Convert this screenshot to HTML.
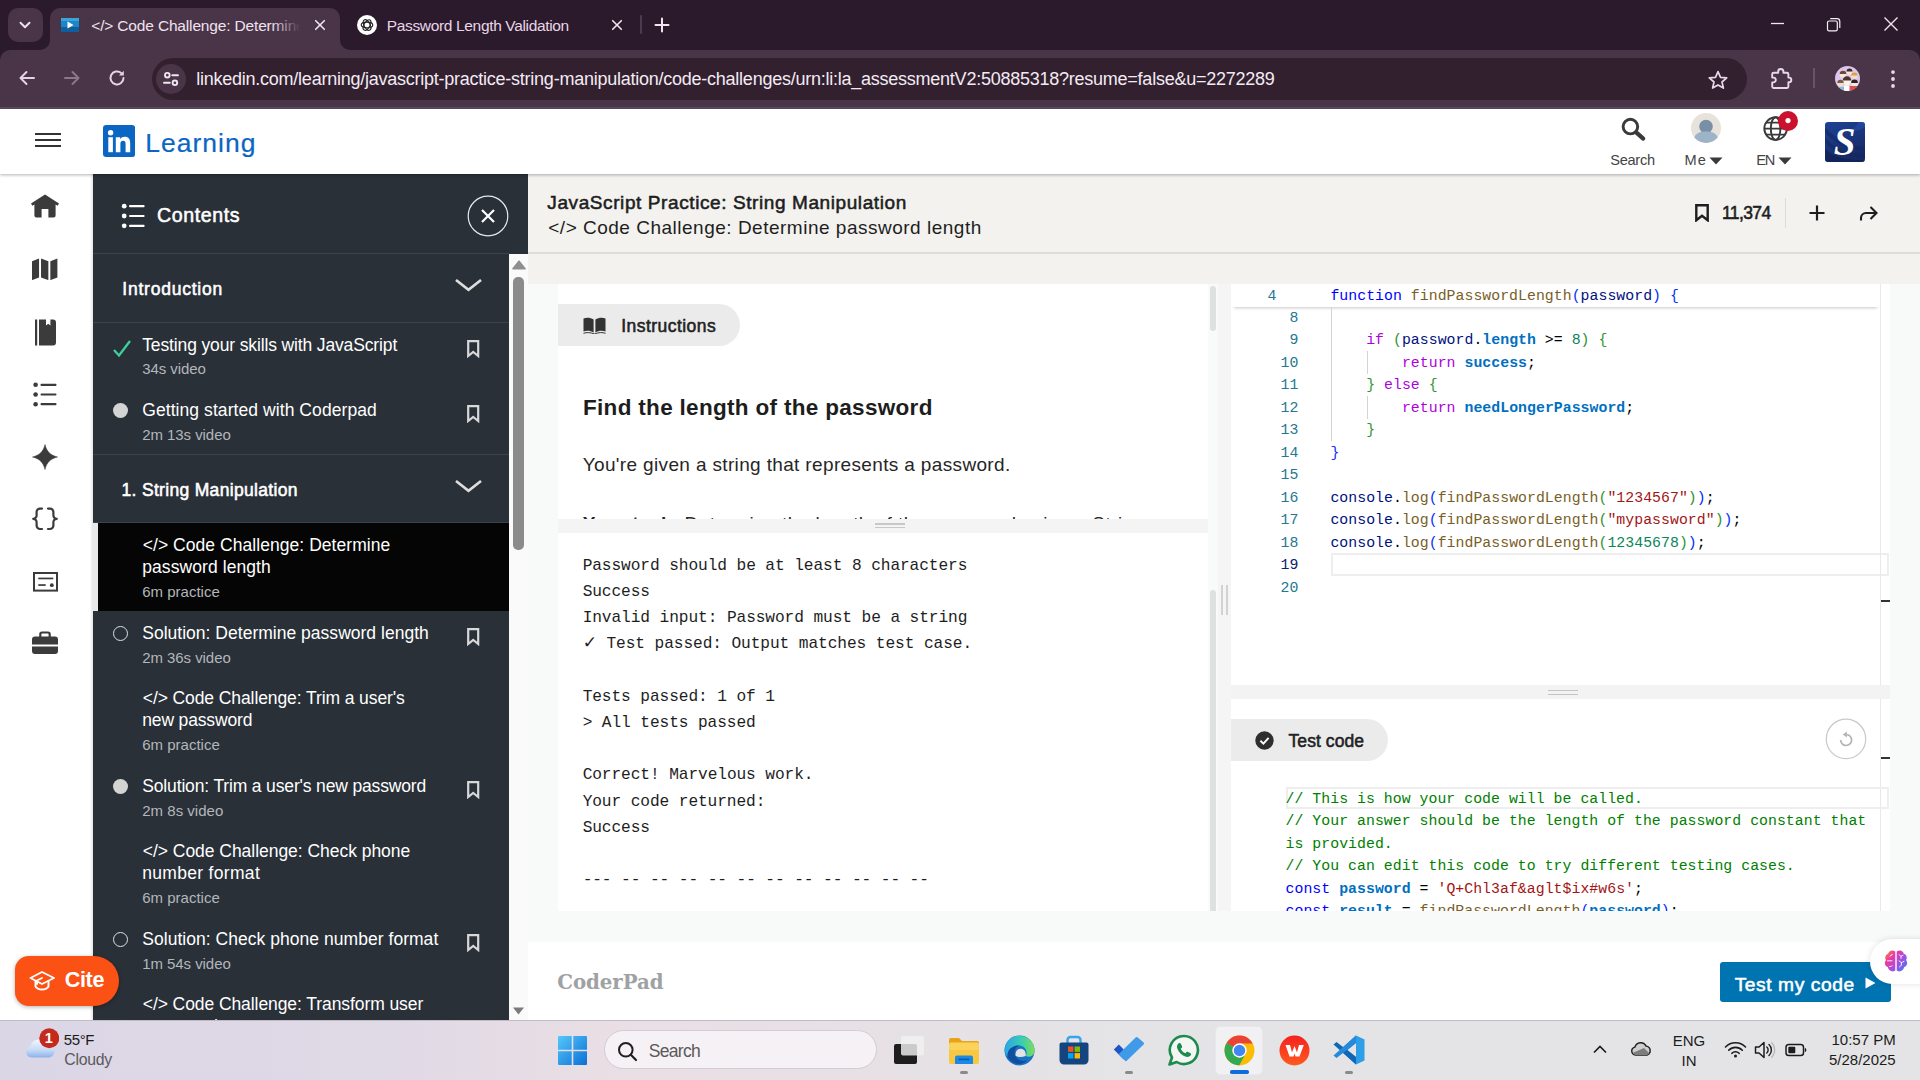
<!DOCTYPE html>
<html lang="en"><head><meta charset="utf-8"><title>Code Challenge: Determine password length</title>
<style>
html,body{margin:0;padding:0;}
body{width:1920px;height:1080px;overflow:hidden;position:relative;background:#f8f9f9;font-family:"Liberation Sans",sans-serif;}
#root{position:absolute;left:0;top:0;width:1920px;height:1080px;overflow:hidden;}
#root div,#root svg,#root span.t{position:absolute;}
span.t{white-space:pre;}
</style></head>
<body><div id="root">
<div style="left:0px;top:0px;width:1920px;height:108px;background:#2b1a2b;"></div>
<div style="left:0px;top:50px;width:1920px;height:58px;background:#4a3448;border-radius:10px 10px 0 0;"></div>
<div style="left:0px;top:107px;width:1920px;height:1.5px;background:#5c4a5e;"></div>
<div style="left:8px;top:8px;width:35px;height:34px;background:#4a3448;border-radius:10px;"></div>
<svg style="left:17px;top:17px;" width="16" height="16" viewBox="0 0 16 16" preserveAspectRatio="none"><path d="M3.5 5.8 L8 10.3 L12.5 5.8" fill="none" stroke="#eadfea" stroke-width="2" stroke-linecap="round" stroke-linejoin="round"/></svg>
<div style="left:50px;top:8px;width:290px;height:44px;background:#4a3448;border-radius:10px 10px 0 0;"></div>
<svg style="left:40px;top:40px;" width="10" height="10" viewBox="0 0 10 10" preserveAspectRatio="none"><path d="M10 0 V10 H0 A10 10 0 0 0 10 0Z" fill="#4a3448"/></svg>
<svg style="left:340px;top:40px;" width="10" height="10" viewBox="0 0 10 10" preserveAspectRatio="none"><path d="M0 0 V10 H10 A10 10 0 0 1 0 0Z" fill="#4a3448"/></svg>
<svg style="left:61px;top:18px;" width="18" height="14" viewBox="0 0 18 14" preserveAspectRatio="none"><rect width="18" height="14" fill="#1b86c8"/><rect y="9" width="18" height="5" fill="#0f5f9e"/><rect width="18" height="3" fill="#3aa3dc"/><path d="M6.5 3.5 L12.5 7 L6.5 10.5Z" fill="#fff"/></svg>
<span class="t" style="letter-spacing:-0.161px;left:91.25px;top:15.63px;font-size:15.5px;line-height:20px;color:#efe3ef;">&lt;/&gt; Code Challenge: Determine</span>
<div style="left:272px;top:12px;width:36px;height:28px;background:linear-gradient(90deg,rgba(74,52,72,0),#4a3448 78%);"></div>
<svg style="left:312px;top:17px;" width="16" height="16" viewBox="0 0 16 16" preserveAspectRatio="none"><path d="M3.7 3.7 L12.3 12.3 M12.3 3.7 L3.7 12.3" stroke="#efe6ef" stroke-width="1.6" stroke-linecap="round"/></svg>
<svg style="left:357px;top:15px;" width="20" height="20" viewBox="0 0 20 20" preserveAspectRatio="none"><circle cx="10" cy="10" r="10" fill="#fff"/><g fill="none" stroke="#222" stroke-width="1.1"><ellipse cx="10" cy="10" rx="5.8" ry="2.9"/><ellipse cx="10" cy="10" rx="5.8" ry="2.9" transform="rotate(60 10 10)"/><ellipse cx="10" cy="10" rx="5.8" ry="2.9" transform="rotate(120 10 10)"/></g></svg>
<span class="t" style="letter-spacing:-0.341px;left:386.75px;top:15.63px;font-size:15.5px;line-height:20px;color:#e8d6e8;">Password Length Validation</span>
<svg style="left:609px;top:17px;" width="16" height="16" viewBox="0 0 16 16" preserveAspectRatio="none"><path d="M3.7 3.7 L12.3 12.3 M12.3 3.7 L3.7 12.3" stroke="#efe6ef" stroke-width="1.6" stroke-linecap="round"/></svg>
<div style="left:640px;top:15px;width:2px;height:19px;background:#4e3a50;border-radius:1px;"></div>
<svg style="left:654px;top:17px;" width="16" height="16" viewBox="0 0 16 16" preserveAspectRatio="none"><path d="M8 1.5 V14.5 M1.5 8 H14.5" stroke="#efe6ef" stroke-width="2" stroke-linecap="round"/></svg>
<svg style="left:1770px;top:16px;" width="16" height="16" viewBox="0 0 16 16" preserveAspectRatio="none"><path d="M1 7.5 H14" stroke="#efe6ef" stroke-width="1.3"/></svg>
<svg style="left:1825px;top:16px;" width="16" height="16" viewBox="0 0 16 16" preserveAspectRatio="none"><rect x="2.5" y="5" width="9.8" height="9.8" rx="1.6" fill="none" stroke="#f6eef6" stroke-width="1.2"/><path d="M5.2 2.6 H12 A2.8 2.8 0 0 1 14.8 5.4 V12" fill="none" stroke="#f6eef6" stroke-width="1.2"/></svg>
<svg style="left:1883px;top:16px;" width="16" height="16" viewBox="0 0 16 16" preserveAspectRatio="none"><path d="M1.5 1.5 L14.5 14.5 M14.5 1.5 L1.5 14.5" stroke="#efe6ef" stroke-width="1.4"/></svg>
<svg style="left:17px;top:68px;" width="20" height="20" viewBox="0 0 20 20" preserveAspectRatio="none"><path d="M17 10 H4 M9.5 4 L3.5 10 L9.5 16" fill="none" stroke="#e3d3e3" stroke-width="2" stroke-linecap="round" stroke-linejoin="round"/></svg>
<svg style="left:62px;top:68px;" width="20" height="20" viewBox="0 0 20 20" preserveAspectRatio="none"><path d="M3 10 H16 M10.5 4 L16.5 10 L10.5 16" fill="none" stroke="#8b768c" stroke-width="2" stroke-linecap="round" stroke-linejoin="round"/></svg>
<svg style="left:107px;top:68px;" width="20" height="20" viewBox="0 0 20 20" preserveAspectRatio="none"><path d="M16.5 10 A6.5 6.5 0 1 1 14.2 5" fill="none" stroke="#e3d3e3" stroke-width="2" stroke-linecap="round"/><path d="M16.8 2.8 V7.6 H12 Z" fill="#e3d3e3"/></svg>
<div style="left:152px;top:58px;width:1595px;height:42px;background:#32202f;border-radius:21px;"></div>
<div style="left:156px;top:64px;width:30px;height:30px;background:#4a3448;border-radius:15px;"></div>
<svg style="left:161px;top:69px;" width="20" height="20" viewBox="0 0 20 20" preserveAspectRatio="none"><g fill="none" stroke="#efe6ef" stroke-width="1.9" stroke-linecap="round"><circle cx="6.3" cy="6.2" r="2.3"/><path d="M11.3 6.2 H17"/><circle cx="13.9" cy="13.8" r="2.3"/><path d="M3 13.8 H8.8"/></g></svg>
<span class="t" style="letter-spacing:-0.245px;left:196.25px;top:68.26px;font-size:18px;line-height:23px;color:#f3ebf3;">linkedin.com/learning/javascript-practice-string-manipulation/code-challenges/urn:li:la_assessmentV2:50885318?resume=false&amp;u=2272289</span>
<svg style="left:1706.5px;top:68.5px;" width="22" height="22" viewBox="0 0 22 22" preserveAspectRatio="none"><path d="M11 2.6 L13.5 8.3 L19.7 8.9 L15 13 L16.4 19.1 L11 15.9 L5.6 19.1 L7 13 L2.3 8.9 L8.5 8.3 Z" fill="none" stroke="#e8d8e8" stroke-width="1.7" stroke-linejoin="round"/></svg>
<svg style="left:1769px;top:66.5px;" width="24" height="24" viewBox="0 0 24 24" preserveAspectRatio="none"><path d="M9.2 4.6 a2.6 2.6 0 0 1 5.2 0 V5.8 H18 a1.4 1.4 0 0 1 1.4 1.4 V10.6 h0.6 a2.3 2.3 0 0 1 0 4.6 H19.4 V19.6 A1.4 1.4 0 0 1 18 21 H4.6 A1.4 1.4 0 0 1 3.2 19.6 V15.4 H4.4 a2.4 2.4 0 0 0 0 -4.8 H3.2 V7.2 A1.4 1.4 0 0 1 4.6 5.8 H9.2 Z" fill="none" stroke="#e8d8e8" stroke-width="1.9" stroke-linejoin="round"/></svg>
<div style="left:1813px;top:68px;width:1.5px;height:20px;background:#66536a;"></div>
<svg style="left:1835px;top:66px;" width="25" height="25" viewBox="0 0 25 25" preserveAspectRatio="none"><defs><clipPath id="pav"><circle cx="12.5" cy="12.5" r="12.5"/></clipPath></defs><circle cx="12.5" cy="12.5" r="12.5" fill="#dcc6ee"/><g clip-path="url(#pav)"><circle cx="8" cy="8.5" r="3.3" fill="#f6e7da"/><path d="M4.7 8 a3.3 3.3 0 0 1 6.6 0 Z" fill="#6b4a3a"/><circle cx="14.5" cy="6" r="3" fill="#f6e7da"/><path d="M11.5 5.6 a3 3 0 0 1 6 0 Z" fill="#3a2b28"/><circle cx="19.3" cy="10" r="3.2" fill="#f3dcc8"/><path d="M16.1 9.6 a3.2 3.2 0 0 1 6.4 0 Z" fill="#d9a441"/><circle cx="12" cy="15" r="4.2" fill="#fbf1e8"/><path d="M7.8 14.4 a4.2 4.2 0 0 1 8.4 0 Z" fill="#4a352c"/><circle cx="5.5" cy="17.5" r="3.2" fill="#f3dcc8"/><path d="M2.3 17 a3.2 3.2 0 0 1 6.4 0 Z" fill="#7a5a48"/><circle cx="19.5" cy="17.5" r="3.4" fill="#f6e7da"/><path d="M16.1 17 a3.4 3.4 0 0 1 6.8 0 Z" fill="#2c2326"/><path d="M14 20 h9 v6 h-9 Z" fill="#d9534a"/><path d="M1 21 h8 v5 h-8 Z" fill="#7fc0d8"/><path d="M9 19.5 h5.5 v6 h-5.5 Z" fill="#ffffff"/></g></svg>
<svg style="left:1887.5px;top:68.5px;" width="10" height="20" viewBox="0 0 10 20" preserveAspectRatio="none"><circle cx="5" cy="3.1" r="1.9" fill="#e8d8e8"/><circle cx="5" cy="10" r="1.9" fill="#e8d8e8"/><circle cx="5" cy="17" r="1.9" fill="#e8d8e8"/></svg>
<div style="left:0px;top:108.5px;width:1920px;height:912px;background:#fff;"></div>
<div style="left:528px;top:174px;width:1392px;height:846px;background:#f8f9f9;"></div>
<div style="left:528px;top:174px;width:1392px;height:110px;background:#f3f2ef;"></div>
<div style="left:528px;top:252px;width:1392px;height:2px;background:#dedddb;"></div>
<div style="left:90px;top:174px;width:3px;height:846px;background:linear-gradient(90deg,#fff,#e4e4e4);"></div>
<svg style="left:31px;top:194px;" width="28" height="24" viewBox="0 0 28 24" preserveAspectRatio="none"><path d="M14 0.5 L28 9.6 L26.6 11.8 L24.6 10.6 V21.5 a2 2 0 0 1 -2 2 H17.4 V15 H10.6 V23.5 H5.4 a2 2 0 0 1 -2 -2 V10.6 L1.4 11.8 L0 9.6 Z" fill="#3b3b3b"/></svg>
<svg style="left:32.3px;top:257.8px;" width="25.4" height="22.6" viewBox="0 0 27 25" preserveAspectRatio="none"><path d="M0 3.5 L7.5 0.5 V21.5 L0 24.5 Z M9.6 0.5 L17.4 3.5 V24.5 L9.6 21.5 Z M19.5 3.5 L27 0.5 V21.5 L19.5 24.5 Z" fill="#3b3b3b"/></svg>
<svg style="left:35px;top:319px;" width="21" height="27" viewBox="0 0 21 27" preserveAspectRatio="none"><path d="M0 0.5 H2.2 V26.5 H0 Z M4 0.5 H11 V6.5 L13.2 4.8 L15.4 6.5 V0.5 H18 a3 3 0 0 1 3 3 V23.5 a3 3 0 0 1 -3 3 H4 Z" fill="#3b3b3b"/></svg>
<svg style="left:33px;top:382px;" width="25" height="25" viewBox="0 0 25 25" preserveAspectRatio="none"><g fill="#3b3b3b"><circle cx="2.6" cy="2.8" r="2.3"/><circle cx="2.6" cy="12.5" r="2.3"/><circle cx="2.6" cy="22.2" r="2.3"/><rect x="7.5" y="1.7" width="16" height="2.2" rx="1"/><rect x="7.5" y="11.4" width="16" height="2.2" rx="1"/><rect x="7.5" y="21.1" width="16" height="2.2" rx="1"/></g></svg>
<svg style="left:32px;top:444px;" width="26" height="26" viewBox="0 0 26 26" preserveAspectRatio="none"><path d="M13 0.5 C14.6 7.4 18.6 11.4 25.5 13 C18.6 14.6 14.6 18.6 13 25.5 C11.4 18.6 7.4 14.6 0.5 13 C7.4 11.4 11.4 7.4 13 0.5 Z" fill="#3b3b3b" stroke="#3b3b3b" stroke-width="0.5" stroke-linejoin="round"/></svg>
<svg style="left:31px;top:507px;" width="28" height="24" viewBox="0 0 28 24" preserveAspectRatio="none"><g fill="none" stroke="#3b3b3b" stroke-width="2.2" stroke-linecap="round" stroke-linejoin="round"><path d="M11 1.6 H9 a3.4 3.4 0 0 0 -3.4 3.4 V8.3 a3.4 3.4 0 0 1 -3.4 3.5 a3.4 3.4 0 0 1 3.4 3.5 V18.6 a3.4 3.4 0 0 0 3.4 3.4 H11"/><path d="M17 1.6 H19 a3.4 3.4 0 0 1 3.4 3.4 V8.3 a3.4 3.4 0 0 0 3.4 3.5 a3.4 3.4 0 0 0 -3.4 3.5 V18.6 a3.4 3.4 0 0 1 -3.4 3.4 H17"/></g></svg>
<svg style="left:32.5px;top:572px;" width="25" height="20" viewBox="0 0 25 20" preserveAspectRatio="none"><rect x="1" y="1" width="23" height="17.6" fill="none" stroke="#3b3b3b" stroke-width="2"/><rect x="5.3" y="5.6" width="15" height="1.7" fill="#3b3b3b"/><rect x="5.3" y="12.2" width="7.4" height="1.7" fill="#3b3b3b"/><circle cx="18.8" cy="13.2" r="1.9" fill="#3b3b3b"/></svg>
<svg style="left:32px;top:630.5px;" width="26" height="24" viewBox="0 0 26 24" preserveAspectRatio="none"><path d="M7.2 5.4 V3.3 a2.8 2.8 0 0 1 2.8 -2.8 H16 a2.8 2.8 0 0 1 2.8 2.8 V5.4 H23 a3 3 0 0 1 3 3 V13.6 H0 V8.4 a3 3 0 0 1 3 -3 Z M9.4 3.4 V5.4 H16.6 V3.4 a0.8 0.8 0 0 0 -0.8 -0.8 H10.2 a0.8 0.8 0 0 0 -0.8 0.8 Z M0 15.5 H26 V20 a3 3 0 0 1 -3 3 H3 a3 3 0 0 1 -3 -3 Z" fill="#3b3b3b" fill-rule="evenodd"/></svg>
<div style="left:93px;top:174px;width:435px;height:846px;background:#293038;"></div>
<div style="left:93px;top:253px;width:416px;height:1px;background:#3d434d;"></div>
<div style="left:93px;top:322px;width:416px;height:1px;background:#3d434d;"></div>
<div style="left:93px;top:454px;width:416px;height:1px;background:#3d434d;"></div>
<div style="left:93px;top:522px;width:416px;height:1px;background:#3d434d;"></div>
<svg style="left:121px;top:203px;" width="25" height="26" viewBox="0 0 25 26" preserveAspectRatio="none"><g fill="#fff"><circle cx="3.2" cy="3.2" r="2.4"/><circle cx="3.2" cy="13" r="2.4"/><circle cx="3.2" cy="22.8" r="2.4"/><rect x="8" y="2.1" width="15.6" height="2.2" rx="1"/><rect x="8" y="11.9" width="15.6" height="2.2" rx="1"/><rect x="8" y="21.7" width="15.6" height="2.2" rx="1"/></g></svg>
<span class="t" style="letter-spacing:0.580px;left:157.05px;top:202.71px;font-size:19.6px;line-height:25px;-webkit-text-stroke:0.55px #fff;color:#fff;">Contents</span>
<svg style="left:467px;top:195px;" width="42" height="42" viewBox="0 0 42 42" preserveAspectRatio="none"><circle cx="21" cy="21" r="19.8" fill="none" stroke="#e8e8e8" stroke-width="1.2"/><path d="M15 15 L27 27 M27 15 L15 27" stroke="#fff" stroke-width="2.2"/></svg>
<span class="t" style="letter-spacing:0.777px;left:122.25px;top:277.84px;font-size:17.5px;line-height:23px;-webkit-text-stroke:0.55px #fff;color:#fff;">Introduction</span>
<svg style="left:455px;top:279px;" width="27" height="13" viewBox="0 0 27 13" preserveAspectRatio="none"><path d="M1 1 L13.5 10.8 L26 1" fill="none" stroke="#dedede" stroke-width="2.6"/></svg>
<span class="t" style="letter-spacing:0.315px;left:121.55px;top:478.64px;font-size:17.5px;line-height:23px;-webkit-text-stroke:0.55px #fff;color:#fff;">1. String Manipulation</span>
<svg style="left:455px;top:479.5px;" width="27" height="13" viewBox="0 0 27 13" preserveAspectRatio="none"><path d="M1 1 L13.5 10.8 L26 1" fill="none" stroke="#dedede" stroke-width="2.6"/></svg>
<svg style="left:112px;top:339px;" width="20" height="19" viewBox="0 0 20 19" preserveAspectRatio="none"><path d="M2 11 L7 16.5 L18 2" fill="none" stroke="#3ecf9c" stroke-width="2.3"/></svg>
<span class="t" style="letter-spacing:-0.137px;left:142.25px;top:334.24px;font-size:17.5px;line-height:23px;color:#fff;">Testing your skills with JavaScript</span>
<span class="t" style="letter-spacing:-0.090px;left:142.25px;top:358.80px;font-size:15px;line-height:20px;color:#b3b6bb;">34s video</span>
<svg style="left:466.5px;top:340px;" width="13" height="18" viewBox="0 0 13 18" preserveAspectRatio="none"><path d="M1.2 1.2 H11.2 V16 L6.2 12 L1.2 16 Z" fill="none" stroke="#d8d8d8" stroke-width="2.2"/></svg>
<div style="left:112.5px;top:402.5px;width:15px;height:15px;background:#d4d4d4;border-radius:50%;"></div>
<span class="t" style="letter-spacing:0.071px;left:142.25px;top:399.24px;font-size:17.5px;line-height:23px;color:#fff;">Getting started with Coderpad</span>
<span class="t" style="letter-spacing:-0.065px;left:142.25px;top:424.90px;font-size:15px;line-height:20px;color:#b3b6bb;">2m 13s video</span>
<svg style="left:466.5px;top:405px;" width="13" height="18" viewBox="0 0 13 18" preserveAspectRatio="none"><path d="M1.2 1.2 H11.2 V16 L6.2 12 L1.2 16 Z" fill="none" stroke="#d8d8d8" stroke-width="2.2"/></svg>
<div style="left:93px;top:522.6px;width:416px;height:88.4px;background:#050505;"></div>
<div style="left:93px;top:522.6px;width:5px;height:88.4px;background:#e9e9e9;"></div>
<span class="t" style="letter-spacing:0.049px;left:142.75px;top:534.04px;font-size:17.5px;line-height:23px;color:#fff;">&lt;/&gt; Code Challenge: Determine</span>
<span class="t" style="letter-spacing:0.075px;left:142.25px;top:556.04px;font-size:17.5px;line-height:23px;color:#fff;">password length</span>
<span class="t" style="letter-spacing:-0.003px;left:142.25px;top:582.30px;font-size:15px;line-height:20px;color:#b3b6bb;">6m practice</span>
<div style="left:112.5px;top:625.5px;width:13px;height:13px;background:transparent;border-radius:50%;border:1.2px solid #e0e0e0;"></div>
<span class="t" style="letter-spacing:0.015px;left:142.25px;top:622.04px;font-size:17.5px;line-height:23px;color:#fff;">Solution: Determine password length</span>
<span class="t" style="letter-spacing:-0.065px;left:142.25px;top:647.80px;font-size:15px;line-height:20px;color:#b3b6bb;">2m 36s video</span>
<svg style="left:466.5px;top:628px;" width="13" height="18" viewBox="0 0 13 18" preserveAspectRatio="none"><path d="M1.2 1.2 H11.2 V16 L6.2 12 L1.2 16 Z" fill="none" stroke="#d8d8d8" stroke-width="2.2"/></svg>
<span class="t" style="letter-spacing:-0.094px;left:142.75px;top:686.94px;font-size:17.5px;line-height:23px;color:#fff;">&lt;/&gt; Code Challenge: Trim a user's</span>
<span class="t" style="letter-spacing:-0.152px;left:142.25px;top:708.94px;font-size:17.5px;line-height:23px;color:#fff;">new password</span>
<span class="t" style="letter-spacing:-0.003px;left:142.25px;top:735.10px;font-size:15px;line-height:20px;color:#b3b6bb;">6m practice</span>
<div style="left:112.5px;top:778.5px;width:15px;height:15px;background:#d4d4d4;border-radius:50%;"></div>
<span class="t" style="letter-spacing:-0.151px;left:142.25px;top:774.64px;font-size:17.5px;line-height:23px;color:#fff;">Solution: Trim a user's new password</span>
<span class="t" style="letter-spacing:0.013px;left:142.25px;top:800.80px;font-size:15px;line-height:20px;color:#b3b6bb;">2m 8s video</span>
<svg style="left:466.5px;top:781px;" width="13" height="18" viewBox="0 0 13 18" preserveAspectRatio="none"><path d="M1.2 1.2 H11.2 V16 L6.2 12 L1.2 16 Z" fill="none" stroke="#d8d8d8" stroke-width="2.2"/></svg>
<span class="t" style="letter-spacing:-0.034px;left:142.75px;top:840.24px;font-size:17.5px;line-height:23px;color:#fff;">&lt;/&gt; Code Challenge: Check phone</span>
<span class="t" style="letter-spacing:0.309px;left:142.25px;top:861.94px;font-size:17.5px;line-height:23px;color:#fff;">number format</span>
<span class="t" style="letter-spacing:-0.003px;left:142.25px;top:888.20px;font-size:15px;line-height:20px;color:#b3b6bb;">6m practice</span>
<div style="left:112.5px;top:931.5px;width:13px;height:13px;background:transparent;border-radius:50%;border:1.2px solid #e0e0e0;"></div>
<span class="t" style="letter-spacing:0.037px;left:142.25px;top:927.64px;font-size:17.5px;line-height:23px;color:#fff;">Solution: Check phone number format</span>
<span class="t" style="letter-spacing:-0.065px;left:142.25px;top:953.80px;font-size:15px;line-height:20px;color:#b3b6bb;">1m 54s video</span>
<svg style="left:466.5px;top:934px;" width="13" height="18" viewBox="0 0 13 18" preserveAspectRatio="none"><path d="M1.2 1.2 H11.2 V16 L6.2 12 L1.2 16 Z" fill="none" stroke="#d8d8d8" stroke-width="2.2"/></svg>
<span class="t" style="letter-spacing:-0.078px;left:142.75px;top:993.24px;font-size:17.5px;line-height:23px;color:#fff;">&lt;/&gt; Code Challenge: Transform user</span>
<span class="t" style="left:143px;top:1015.24px;font-size:17.5px;line-height:23px;color:#fff;">password</span>
<div style="left:509px;top:254px;width:19px;height:766px;background:#fafafa;"></div>
<svg style="left:511.5px;top:259.5px;" width="14" height="10" viewBox="0 0 14 10" preserveAspectRatio="none"><path d="M7 1.2 L13 8.8 H1 Z" fill="#8f8f8f" stroke="#8f8f8f" stroke-width="1.6" stroke-linejoin="round"/></svg>
<div style="left:513px;top:277px;width:10.5px;height:273px;background:#8b8b8b;border-radius:5px;"></div>
<svg style="left:512px;top:1006px;" width="13" height="10" viewBox="0 0 13 10" preserveAspectRatio="none"><path d="M6.5 8.5 L12 1.5 H1 Z" fill="#7a7a7a"/></svg>
<span class="t" style="letter-spacing:0.592px;left:547.35px;top:190.32px;font-size:19px;line-height:25px;-webkit-text-stroke:0.55px #1e1e1e;color:#1e1e1e;">JavaScript Practice: String Manipulation</span>
<span class="t" style="letter-spacing:0.503px;left:548.25px;top:215.42px;font-size:19px;line-height:25px;color:#1e1e1e;">&lt;/&gt; Code Challenge: Determine password length</span>
<svg style="left:1695px;top:204px;" width="14" height="18" viewBox="0 0 14 18" preserveAspectRatio="none"><path d="M1.3 1.3 H12.7 V16.3 L7 11.8 L1.3 16.3 Z" fill="none" stroke="#1e1e1e" stroke-width="2.4"/></svg>
<span class="t" style="letter-spacing:-0.627px;left:1722.05px;top:201.84px;font-size:17.5px;line-height:23px;-webkit-text-stroke:0.55px #1e1e1e;color:#1e1e1e;">11,374</span>
<div style="left:1785px;top:198px;width:1px;height:30px;background:#dcdbd8;"></div>
<svg style="left:1808px;top:204px;" width="18" height="18" viewBox="0 0 18 18" preserveAspectRatio="none"><path d="M9 1.5 V16.5 M1.5 9 H16.5" stroke="#1e1e1e" stroke-width="2.2"/></svg>
<svg style="left:1859px;top:205px;" width="20" height="17" viewBox="0 0 20 17" preserveAspectRatio="none"><path d="M2 15.5 V13 a5 5 0 0 1 5 -5 H17 M11.5 2 L17.5 8 L11.5 14" fill="none" stroke="#1e1e1e" stroke-width="2.1"/></svg>
<div style="left:558px;top:284px;width:650px;height:235px;background:#fff;"></div>
<div style="left:1208px;top:284px;width:10px;height:627px;background:#f9fafa;"></div>
<div style="left:558px;top:304px;width:182px;height:42px;background:#ebebeb;border-radius:0 21px 21px 0;"></div>
<svg style="left:583px;top:317px;" width="23" height="17" viewBox="0 0 23 17" preserveAspectRatio="none"><path d="M0.5 1.5 C3.5 0.2 7.5 0.4 10.6 2.6 V15.6 C7.5 13.6 3.5 13.4 0.5 14.6 Z M12.4 2.6 C15.5 0.4 19.5 0.2 22.5 1.5 V14.6 C19.5 13.4 15.5 13.6 12.4 15.6 Z" fill="#333"/><path d="M0.5 16.3 C3.5 15.2 7.5 15.3 11.5 17 C15.5 15.3 19.5 15.2 22.5 16.3" fill="none" stroke="#333" stroke-width="1"/></svg>
<span class="t" style="letter-spacing:0.456px;left:621.25px;top:315.14px;font-size:17.5px;line-height:23px;-webkit-text-stroke:0.55px #222;color:#222;">Instructions</span>
<span class="t" style="letter-spacing:0.317px;left:582.95px;top:393.30px;font-size:22.5px;line-height:29px;font-weight:700;color:#1d1d1d;">Find the length of the password</span>
<span class="t" style="letter-spacing:0.352px;left:582.75px;top:451.92px;font-size:19px;line-height:25px;color:#262626;">You're given a string that represents a password.</span>
<div style="left:558px;top:500px;width:652px;height:19px;overflow:hidden;">
<span class="t" style="letter-spacing:0.450px;left:24.75px;top:11.42px;font-size:19px;line-height:25px;color:#262626;"><b>Your task:</b> Determine the length of the password using a String</span>
</div>
<div style="left:1210px;top:286px;width:6px;height:45px;background:#dfe1e1;border-radius:3px;"></div>
<div style="left:558px;top:519px;width:650px;height:14px;background:#f4f4f4;"></div>
<div style="left:875px;top:523.3px;width:30px;height:1.5px;background:#c8c8c8;"></div>
<div style="left:875px;top:526.6px;width:30px;height:1.5px;background:#c8c8c8;"></div>
<div style="left:558px;top:533px;width:650px;height:378px;background:#fff;"></div>
<span class="t" style="letter-spacing:-0.097px;left:582.65px;top:555.88px;font-size:16.2px;line-height:21px;font-family:'Liberation Mono', monospace;color:#1e1e1e;">Password should be at least 8 characters</span>
<span class="t" style="letter-spacing:-0.110px;left:582.65px;top:582.08px;font-size:16.2px;line-height:21px;font-family:'Liberation Mono', monospace;color:#1e1e1e;">Success</span>
<span class="t" style="letter-spacing:-0.097px;left:582.65px;top:608.28px;font-size:16.2px;line-height:21px;font-family:'Liberation Mono', monospace;color:#1e1e1e;">Invalid input: Password must be a string</span>
<span class="t" style="letter-spacing:-0.093px;left:582.65px;top:634.48px;font-size:16.2px;line-height:21px;font-family:'Liberation Mono', monospace;color:#1e1e1e;"><span style="font-family:DejaVu Sans,sans-serif;font-size:17px;line-height:1px;">✓</span> Test passed: Output matches test case.</span>
<span class="t" style="letter-spacing:-0.100px;left:582.65px;top:686.88px;font-size:16.2px;line-height:21px;font-family:'Liberation Mono', monospace;color:#1e1e1e;">Tests passed: 1 of 1</span>
<span class="t" style="letter-spacing:-0.100px;left:582.65px;top:713.08px;font-size:16.2px;line-height:21px;font-family:'Liberation Mono', monospace;color:#1e1e1e;">&gt; All tests passed</span>
<span class="t" style="letter-spacing:-0.098px;left:582.65px;top:765.48px;font-size:16.2px;line-height:21px;font-family:'Liberation Mono', monospace;color:#1e1e1e;">Correct! Marvelous work.</span>
<span class="t" style="letter-spacing:-0.100px;left:582.65px;top:791.68px;font-size:16.2px;line-height:21px;font-family:'Liberation Mono', monospace;color:#1e1e1e;">Your code returned:</span>
<span class="t" style="letter-spacing:-0.110px;left:582.65px;top:817.88px;font-size:16.2px;line-height:21px;font-family:'Liberation Mono', monospace;color:#1e1e1e;">Success</span>
<span class="t" style="letter-spacing:-0.097px;left:582.65px;top:870.28px;font-size:16.2px;line-height:21px;font-family:'Liberation Mono', monospace;color:#1e1e1e;">--- -- -- -- -- -- -- -- -- -- -- --</span>
<div style="left:1210px;top:590px;width:6px;height:321px;background:#dfe1e1;border-radius:3px 3px 0 0;"></div>
<div style="left:1218px;top:284px;width:13px;height:627px;background:#f5f5f5;"></div>
<div style="left:1221px;top:585px;width:2px;height:30px;background:#d2d2d2;"></div>
<div style="left:1226px;top:585px;width:2px;height:30px;background:#d2d2d2;"></div>
<div style="left:1231px;top:284px;width:659px;height:401px;background:#fff;"></div>
<div style="left:1231px;top:284px;width:649px;height:22.5px;background:#fff;box-shadow:0 4px 3px -3px rgba(0,0,0,.22);"></div>
<span class="t" style="right:643.5px;top:287.15px;font-size:14.83px;line-height:19px;font-family:'Liberation Mono', monospace;color:#237893;">4</span>
<span class="t" style="letter-spacing:0.035px;left:1330.45px;top:287.15px;font-size:14.83px;line-height:19px;font-family:'Liberation Mono', monospace;color:#000;"><span style="color:#0000ff;">function</span> <span style="color:#795e26;">findPasswordLength</span><span style="color:#0431fa;">(</span><span style="color:#001080;">password</span><span style="color:#0431fa;">)</span> <span style="color:#0431fa;">{</span></span>
<div style="left:1331px;top:553px;width:554px;height:19px;background:transparent;border:2px solid #eeeeee;"></div>
<span class="t" style="right:621.7px;top:309.15px;font-size:14.83px;line-height:19px;font-family:'Liberation Mono', monospace;color:#237893;">8</span>
<span class="t" style="right:621.7px;top:331.15px;font-size:14.83px;line-height:19px;font-family:'Liberation Mono', monospace;color:#237893;">9</span>
<span class="t" style="letter-spacing:0.035px;left:1330.45px;top:331.15px;font-size:14.83px;line-height:19px;font-family:'Liberation Mono', monospace;color:#000;">    <span style="color:#af00db;">if</span> <span style="color:#319331;">(</span><span style="color:#001080;">password</span>.<span style="color:#0070c1;font-weight:700;">length</span> &gt;= <span style="color:#098658;">8</span><span style="color:#319331;">)</span> <span style="color:#319331;">{</span></span>
<span class="t" style="right:621.7px;top:354.15px;font-size:14.83px;line-height:19px;font-family:'Liberation Mono', monospace;color:#237893;">10</span>
<span class="t" style="letter-spacing:0.036px;left:1330.45px;top:354.15px;font-size:14.83px;line-height:19px;font-family:'Liberation Mono', monospace;color:#000;">        <span style="color:#af00db;">return</span> <span style="color:#0070c1;font-weight:700;">success</span>;</span>
<span class="t" style="right:621.7px;top:376.15px;font-size:14.83px;line-height:19px;font-family:'Liberation Mono', monospace;color:#237893;">11</span>
<span class="t" style="letter-spacing:0.036px;left:1330.45px;top:376.15px;font-size:14.83px;line-height:19px;font-family:'Liberation Mono', monospace;color:#000;">    <span style="color:#319331;">}</span> <span style="color:#af00db;">else</span> <span style="color:#319331;">{</span></span>
<span class="t" style="right:621.7px;top:399.15px;font-size:14.83px;line-height:19px;font-family:'Liberation Mono', monospace;color:#237893;">12</span>
<span class="t" style="letter-spacing:0.036px;left:1330.45px;top:399.15px;font-size:14.83px;line-height:19px;font-family:'Liberation Mono', monospace;color:#000;">        <span style="color:#af00db;">return</span> <span style="color:#0070c1;font-weight:700;">needLongerPassword</span>;</span>
<span class="t" style="right:621.7px;top:421.15px;font-size:14.83px;line-height:19px;font-family:'Liberation Mono', monospace;color:#237893;">13</span>
<span class="t" style="letter-spacing:0.042px;left:1330.45px;top:421.15px;font-size:14.83px;line-height:19px;font-family:'Liberation Mono', monospace;color:#000;">    <span style="color:#319331;">}</span></span>
<span class="t" style="right:621.7px;top:444.15px;font-size:14.83px;line-height:19px;font-family:'Liberation Mono', monospace;color:#237893;">14</span>
<span class="t" style="left:1330.45px;top:444.15px;font-size:14.83px;line-height:19px;font-family:'Liberation Mono', monospace;color:#000;"><span style="color:#0431fa;">}</span></span>
<span class="t" style="right:621.7px;top:466.15px;font-size:14.83px;line-height:19px;font-family:'Liberation Mono', monospace;color:#237893;">15</span>
<span class="t" style="right:621.7px;top:489.15px;font-size:14.83px;line-height:19px;font-family:'Liberation Mono', monospace;color:#237893;">16</span>
<span class="t" style="letter-spacing:0.035px;left:1330.45px;top:489.15px;font-size:14.83px;line-height:19px;font-family:'Liberation Mono', monospace;color:#000;"><span style="color:#001080;">console</span>.<span style="color:#795e26;">log</span><span style="color:#0431fa;">(</span><span style="color:#795e26;">findPasswordLength</span><span style="color:#319331;">(</span><span style="color:#a31515;">"1234567"</span><span style="color:#319331;">)</span><span style="color:#0431fa;">)</span>;</span>
<span class="t" style="right:621.7px;top:511.15px;font-size:14.83px;line-height:19px;font-family:'Liberation Mono', monospace;color:#237893;">17</span>
<span class="t" style="letter-spacing:0.035px;left:1330.45px;top:511.15px;font-size:14.83px;line-height:19px;font-family:'Liberation Mono', monospace;color:#000;"><span style="color:#001080;">console</span>.<span style="color:#795e26;">log</span><span style="color:#0431fa;">(</span><span style="color:#795e26;">findPasswordLength</span><span style="color:#319331;">(</span><span style="color:#a31515;">"mypassword"</span><span style="color:#319331;">)</span><span style="color:#0431fa;">)</span>;</span>
<span class="t" style="right:621.7px;top:534.15px;font-size:14.83px;line-height:19px;font-family:'Liberation Mono', monospace;color:#237893;">18</span>
<span class="t" style="letter-spacing:0.035px;left:1330.45px;top:534.15px;font-size:14.83px;line-height:19px;font-family:'Liberation Mono', monospace;color:#000;"><span style="color:#001080;">console</span>.<span style="color:#795e26;">log</span><span style="color:#0431fa;">(</span><span style="color:#795e26;">findPasswordLength</span><span style="color:#319331;">(</span><span style="color:#098658;">12345678</span><span style="color:#319331;">)</span><span style="color:#0431fa;">)</span>;</span>
<span class="t" style="right:621.7px;top:556.15px;font-size:14.83px;line-height:19px;font-family:'Liberation Mono', monospace;color:#0b216f;">19</span>
<span class="t" style="right:621.7px;top:579.15px;font-size:14.83px;line-height:19px;font-family:'Liberation Mono', monospace;color:#237893;">20</span>
<div style="left:1331px;top:306.5px;width:1px;height:134.5px;background:#d3d3d3;"></div>
<div style="left:1367px;top:351px;width:1px;height:22.5px;background:#d3d3d3;"></div>
<div style="left:1367px;top:396px;width:1px;height:22.5px;background:#d3d3d3;"></div>
<div style="left:1880px;top:284px;width:1px;height:401px;background:#e9e9e9;"></div>
<div style="left:1881px;top:600.3px;width:9px;height:2px;background:#333;"></div>
<div style="left:1231px;top:685px;width:659px;height:14px;background:#f3f3f3;"></div>
<div style="left:1548px;top:689.5px;width:30px;height:1.2px;background:#c4c4c4;"></div>
<div style="left:1548px;top:693.5px;width:30px;height:1.2px;background:#c4c4c4;"></div>
<div style="left:1231px;top:699px;width:659px;height:212px;background:#fff;"></div>
<div style="left:1231px;top:719px;width:156.5px;height:42px;background:#ebebeb;border-radius:0 21px 21px 0;"></div>
<svg style="left:1255px;top:730.5px;" width="19" height="19" viewBox="0 0 19 19" preserveAspectRatio="none"><circle cx="9.5" cy="9.5" r="9.2" fill="#2f2f2f"/><path d="M5.4 9.8 L8.4 12.6 L13.6 6.8" fill="none" stroke="#fff" stroke-width="1.9"/></svg>
<span class="t" style="letter-spacing:0.074px;left:1288.55px;top:729.74px;font-size:17.5px;line-height:23px;-webkit-text-stroke:0.55px #222;color:#222;">Test code</span>
<svg style="left:1825px;top:718px;" width="42" height="42" viewBox="0 0 42 42" preserveAspectRatio="none"><circle cx="21" cy="20.9" r="19.7" fill="#fff" stroke="#c9c9c9" stroke-width="1.2"/><path d="M21.4 16.5 A5.5 5.5 0 1 1 15.6 22" fill="none" stroke="#b1b4b4" stroke-width="1.7"/><path d="M17.9 16.6 L21.9 13.6 V19.4 Z" fill="#b1b4b4"/></svg>
<div style="left:1880px;top:699px;width:1px;height:212px;background:#e9e9e9;"></div>
<div style="left:1881px;top:757.2px;width:9px;height:2px;background:#333;"></div>
<div style="left:1286px;top:787px;width:599px;height:17.5px;background:transparent;border:2px solid #eeeeee;"></div>
<div style="left:1231px;top:780px;width:659px;height:131px;overflow:hidden;">
<span class="t" style="letter-spacing:0.036px;left:54.549999999999955px;top:9.55px;font-size:14.83px;line-height:19px;font-family:'Liberation Mono', monospace;color:#000;"><span style="color:#008000;">// This is how your code will be called.</span></span>
<span class="t" style="letter-spacing:0.036px;left:54.549999999999955px;top:31.55px;font-size:14.83px;line-height:19px;font-family:'Liberation Mono', monospace;color:#000;"><span style="color:#008000;">// Your answer should be the length of the password constant that</span></span>
<span class="t" style="letter-spacing:0.039px;left:54.549999999999955px;top:54.55px;font-size:14.83px;line-height:19px;font-family:'Liberation Mono', monospace;color:#000;"><span style="color:#008000;">is provided.</span></span>
<span class="t" style="letter-spacing:0.036px;left:54.549999999999955px;top:76.55px;font-size:14.83px;line-height:19px;font-family:'Liberation Mono', monospace;color:#000;"><span style="color:#008000;">// You can edit this code to try different testing cases.</span></span>
<span class="t" style="letter-spacing:0.036px;left:54.549999999999955px;top:99.55px;font-size:14.83px;line-height:19px;font-family:'Liberation Mono', monospace;color:#000;"><span style="color:#0000ff;">const</span> <span style="color:#0070c1;font-weight:700;">password</span> = <span style="color:#a31515;">'Q+Chl3af&amp;aglt$ix#w6s'</span>;</span>
<span class="t" style="letter-spacing:0.035px;left:54.549999999999955px;top:121.55px;font-size:14.83px;line-height:19px;font-family:'Liberation Mono', monospace;color:#000;"><span style="color:#0000ff;">const</span> <span style="color:#0070c1;font-weight:700;">result</span> = <span style="color:#795e26;">findPasswordLength</span><span style="color:#0431fa;">(</span><span style="color:#0070c1;font-weight:700;">password</span><span style="color:#0431fa;">)</span>;</span>
</div>
<div style="left:528px;top:942px;width:1392px;height:78px;background:#fff;"></div>
<span class="t" style="letter-spacing:-0.069px;left:557.25px;top:969.15px;font-size:19.8px;line-height:26px;font-family:'DejaVu Serif', 'Liberation Serif', serif;font-weight:700;color:#a0a1a3;">CoderPad</span>
<div style="left:1720px;top:962px;width:171px;height:40px;background:#0073b1;border-radius:3px;"></div>
<span class="t" style="letter-spacing:0.587px;left:1734.65px;top:971.85px;font-size:19.2px;line-height:25px;-webkit-text-stroke:0.55px #fff;color:#fff;">Test my code</span>
<svg style="left:1865px;top:976.5px;" width="11" height="12" viewBox="0 0 11 12" preserveAspectRatio="none"><path d="M0.5 0.5 L10.5 6 L0.5 11.5 Z" fill="#fff"/></svg>
<div style="left:15px;top:956px;width:104px;height:50px;background:#fb5114;border-radius:14px 25px 25px 14px;box-shadow:0 1px 4px rgba(0,0,0,.3);"></div>
<svg style="left:29px;top:969.5px;" width="27.5" height="24" viewBox="0 0 27.5 24" preserveAspectRatio="none"><g fill="none" stroke="#fff" stroke-width="1.9" stroke-linejoin="round" stroke-linecap="round"><path d="M13 2 L25 8 L13 14 L1.5 8 Z"/><path d="M6.5 11 V16.5 C9 20.5 17 20.5 19.5 16.5 V11"/><path d="M13 8 L8 10.5 V14"/></g></svg>
<span class="t" style="letter-spacing:-0.366px;left:64.75px;top:965.82px;font-size:21.6px;line-height:28px;font-weight:700;color:#fff;">Cite</span>
<div style="left:1870px;top:938.7px;width:70px;height:45.3px;background:#fff;border-radius:22.65px;box-shadow:0 0 6px rgba(0,0,0,.13);"></div>
<svg style="left:1883.5px;top:950px;" width="24" height="23" viewBox="0 0 24 23" preserveAspectRatio="none"><defs><linearGradient id="brg" x1="0" y1="0.1" x2="1" y2="0.9"><stop offset="0" stop-color="#ff7a3d"/><stop offset=".3" stop-color="#e93aa6"/><stop offset=".6" stop-color="#a94be0"/><stop offset="1" stop-color="#3f7df7"/></linearGradient></defs><path d="M11.3 1.6 C8.6 -0.6 4.6 0.6 4.2 3.8 C1.4 4.6 0.4 7.8 2 10 C-0.2 12.4 0.8 16.2 3.8 17 C4.4 20.6 8.6 22.6 11.3 20.6 Z M12.7 1.6 C15.4 -0.6 19.4 0.6 19.8 3.8 C22.6 4.6 23.6 7.8 22 10 C24.2 12.4 23.2 16.2 20.2 17 C19.6 20.6 15.4 22.6 12.7 20.6 Z" fill="url(#brg)"/><g stroke="#fff" stroke-width="0.9" fill="none" stroke-linecap="round"><path d="M3.5 10.8 H8 M6 6.2 Q6.4 4.6 8.4 4.6 M5.6 16.6 Q7.4 17.2 8.2 15.6"/><path d="M15.2 4.6 L17 6.4 L19 5.2 M17 6.4 V8.4 M15 10.8 L17.4 12.6 L20 11.4 M17.4 12.6 V15 M15.4 17 L17.4 15 "/></g></svg>
<div style="left:0px;top:108.5px;width:1920px;height:65.5px;background:#fff;box-shadow:0 1px 3px rgba(0,0,0,.3);"></div>
<div style="left:35px;top:132.6px;width:25.6px;height:2px;background:#333;"></div>
<div style="left:35px;top:138.8px;width:25.6px;height:2px;background:#333;"></div>
<div style="left:35px;top:145.1px;width:25.6px;height:2px;background:#333;"></div>
<svg style="left:103px;top:125px;" width="32.2" height="32" viewBox="0 0 32.2 32" preserveAspectRatio="none"><rect width="32.2" height="32" rx="3.2" fill="#0a66c2"/><circle cx="7.6" cy="7.8" r="2.7" fill="#fff"/><rect x="5.3" y="12.2" width="4.6" height="15" fill="#fff"/><path d="M12.8 12.2 H17.2 V14.2 C18.2 12.6 19.9 11.8 21.9 11.8 C25.6 11.8 27.2 14.2 27.2 18 V27.2 H22.6 V19 C22.6 17 21.9 15.8 20.2 15.8 C18.4 15.8 17.4 17 17.4 19 V27.2 H12.8 Z" fill="#fff"/></svg>
<span class="t" style="letter-spacing:0.994px;left:145.35px;top:125.62px;font-size:26.5px;line-height:34px;color:#0a66c2;-webkit-text-stroke:0.2px #0a66c2;">Learning</span>
<svg style="left:1620px;top:116px;" width="28" height="28" viewBox="0 0 28 28" preserveAspectRatio="none"><circle cx="10.4" cy="10.6" r="7.3" fill="none" stroke="#3a3a3a" stroke-width="2.9"/><path d="M16.2 16.4 L23.2 22.6" stroke="#3a3a3a" stroke-width="4.2" stroke-linecap="round"/></svg>
<span class="t" style="letter-spacing:-0.290px;left:1610.25px;top:150.84px;font-size:14.6px;line-height:19px;color:#444;">Search</span>
<svg style="left:1690.5px;top:113px;" width="30" height="30" viewBox="0 0 30 30" preserveAspectRatio="none"><defs><clipPath id="avc"><circle cx="15" cy="15" r="15"/></clipPath></defs><circle cx="15" cy="15" r="15" fill="#e7e2dc"/><g clip-path="url(#avc)"><circle cx="15" cy="13.5" r="6.8" fill="#788fa5"/><path d="M2 31 C2 20.5 8.5 18.6 15 18.6 C21.5 18.6 28 20.5 28 31 Z" fill="#9db3c8"/></g></svg>
<span class="t" style="left:1684.6px;top:150.84px;font-size:14.6px;line-height:19px;color:#444;letter-spacing:0.9px;">Me</span>
<svg style="left:1708.8px;top:156.8px;" width="14" height="8" viewBox="0 0 14 8" preserveAspectRatio="none"><path d="M0.5 0.5 H13.5 L7 7.5 Z" fill="#3a3a3a"/></svg>
<svg style="left:1763px;top:115.5px;" width="26" height="26" viewBox="0 0 26 26" preserveAspectRatio="none"><g fill="none" stroke="#3a3a3a" stroke-width="1.9"><circle cx="12.6" cy="12.6" r="11.3"/><ellipse cx="12.6" cy="12.6" rx="4.8" ry="11.3"/><path d="M1.3 12.6 H23.9 M3 6.6 H22.2 M3 18.6 H22.2"/></g></svg>
<svg style="left:1778px;top:111px;" width="20" height="20" viewBox="0 0 20 20" preserveAspectRatio="none"><circle cx="10" cy="10" r="10" fill="#cb112d"/><circle cx="10" cy="9.6" r="2.6" fill="#fff"/></svg>
<span class="t" style="letter-spacing:-1.281px;left:1756.25px;top:150.84px;font-size:14.6px;line-height:19px;color:#444;">EN</span>
<svg style="left:1777.6px;top:156.8px;" width="14" height="8" viewBox="0 0 14 8" preserveAspectRatio="none"><path d="M0.5 0.5 H13.5 L7 7.5 Z" fill="#3a3a3a"/></svg>
<svg style="left:1825px;top:122px;" width="40" height="40" viewBox="0 0 40 40" preserveAspectRatio="none"><defs><clipPath id="slc"><rect width="40" height="40" rx="3.2"/></clipPath><linearGradient id="slg" x1="0" y1="0" x2="0.4" y2="1"><stop offset="0" stop-color="#1d4297"/><stop offset="1" stop-color="#172a66"/></linearGradient></defs><g clip-path="url(#slc)"><rect width="40" height="40" fill="url(#slg)"/><path d="M0 6 C10 14 20 24 40 25 V29 C20 28 10 20 0 11 Z" fill="#14265e" opacity=".55"/><path d="M0 16 C10 26 22 32 40 32 V36 C22 36 10 30 0 21 Z" fill="#14265e" opacity=".55"/><path d="M0 27 C8 34 18 38 40 38.5 V40 H0 Z" fill="#121f52" opacity=".7"/><path d="M33 0 C32 5 28 8 22 8 C30 10 36 8 40 5 V0 Z" fill="#274fa8" opacity=".6"/></g><text x="19.6" y="33" text-anchor="middle" font-family="Liberation Serif, serif" font-weight="700" font-style="italic" font-size="39" fill="#fff">S</text></svg>
<div style="left:0px;top:1020px;width:1920px;height:60px;background:linear-gradient(90deg,#dbd6e6 0%,#e0d9e6 20%,#eadfe4 33%,#e6e1e5 48%,#e4e4e6 60%,#e4e4e6 100%);border-top:1px solid #bfbcc3;box-sizing:border-box;"></div>
<svg style="left:24.5px;top:1037.5px;" width="31" height="20" viewBox="0 0 31 20" preserveAspectRatio="none"><defs><linearGradient id="cl" x1="0" y1="0" x2="0" y2="1"><stop offset="0" stop-color="#f3f7fe"/><stop offset=".6" stop-color="#c5d9f6"/><stop offset="1" stop-color="#8db2ea"/></linearGradient></defs><path d="M6.5 19.5 a5.6 5.6 0 0 1 -0.8 -11.1 a8.4 8.4 0 0 1 16 -1.8 a6.5 6.5 0 0 1 2.6 12.9 Z" fill="url(#cl)"/></svg>
<svg style="left:38.5px;top:1028px;" width="20.5" height="20.5" viewBox="0 0 20.5 20.5" preserveAspectRatio="none"><circle cx="10.25" cy="10.25" r="10" fill="#c42b1c"/></svg>
<span class="t" style="left:-351.2px;width:800px;text-align:center;top:1028.78px;font-size:14.5px;line-height:19px;font-weight:700;color:#fff;">1</span>
<span class="t" style="letter-spacing:-0.353px;left:63.75px;top:1030.10px;font-size:15px;line-height:20px;color:#1a1a1a;">55°F</span>
<span class="t" style="letter-spacing:-0.258px;left:64.25px;top:1048.93px;font-size:15.8px;line-height:21px;color:#5a5a5a;">Cloudy</span>
<svg style="left:558px;top:1036px;" width="29" height="29" viewBox="0 0 29 29" preserveAspectRatio="none"><defs><linearGradient id="wg" x1="0" y1="0" x2="1" y2="1"><stop offset="0" stop-color="#56c8fb"/><stop offset="1" stop-color="#0a6fd6"/></linearGradient></defs><path d="M0 1 a1 1 0 0 1 1 -1 H13.7 V13.7 H0 Z M15.3 0 H28 a1 1 0 0 1 1 1 V13.7 H15.3 Z M0 15.3 H13.7 V29 H1 a1 1 0 0 1 -1 -1 Z M15.3 15.3 H29 V28 a1 1 0 0 1 -1 1 H15.3 Z" fill="url(#wg)"/></svg>
<div style="left:603.5px;top:1030.2px;width:273.5px;height:39.3px;background:#f6f1f5;border-radius:19.5px;border:1px solid #d3ccd4;box-sizing:border-box;"></div>
<svg style="left:617px;top:1040.5px;" width="21" height="21" viewBox="0 0 21 21" preserveAspectRatio="none"><circle cx="8.8" cy="8.8" r="6.8" fill="none" stroke="#1f1f1f" stroke-width="2"/><path d="M13.8 13.8 L19 19" stroke="#1f1f1f" stroke-width="2.2" stroke-linecap="round"/></svg>
<span class="t" style="letter-spacing:-0.671px;left:648.65px;top:1039.64px;font-size:17.5px;line-height:23px;color:#5a5a5a;">Search</span>
<svg style="left:894px;top:1036px;" width="30" height="28" viewBox="0 0 30 28" preserveAspectRatio="none"><rect x="0" y="8" width="23" height="20" rx="2" fill="#1e1e1e"/><rect x="7" y="0" width="23" height="19.5" rx="2" fill="#f2f2f2" fill-opacity=".82"/></svg>
<svg style="left:948px;top:1036px;" width="32" height="29" viewBox="0 0 32 29" preserveAspectRatio="none"><path d="M1 4 a2 2 0 0 1 2 -2 H11 L14 5 H29 a2 2 0 0 1 2 2 V10 H1 Z" fill="#e8a317"/><rect x="1" y="6.5" width="30" height="21.5" rx="2" fill="#fbd35a"/><path d="M1 14 H31 V26 a2 2 0 0 1 -2 2 H3 a2 2 0 0 1 -2 -2 Z" fill="#f9c843"/><path d="M7 28 V21.5 a2 2 0 0 1 2 -2 H23 a2 2 0 0 1 2 2 V28 Z" fill="#1b8ae6"/><rect x="10.5" y="22.5" width="11" height="1.8" rx=".9" fill="#0c5cb0"/></svg>
<div style="left:960px;top:1070.5px;width:8px;height:3px;background:#8a8a8a;border-radius:1.5px;"></div>
<svg style="left:1004px;top:1034.5px;" width="31" height="31" viewBox="0 0 31 31" preserveAspectRatio="none"><defs><linearGradient id="eg1" x1="0" y1="0" x2="1" y2="0"><stop offset="0" stop-color="#2aa6e6"/><stop offset=".6" stop-color="#3ccfae"/><stop offset="1" stop-color="#7ddc5a"/></linearGradient></defs><circle cx="15.5" cy="15.5" r="15" fill="#1672c4"/><path d="M1 12 C3 3 12 -1 20 1.5 C28 4 31.5 11 30 18 C29 21.5 25 22.5 21.5 21 C24.5 17 21 10.5 15 10.5 C8 10.5 3 15 3.5 22 C1 19 0.2 15.5 1 12 Z" fill="url(#eg1)"/><path d="M3.5 22 C3 15 8 10.5 15 10.5 C11 12.5 9.5 17 11.5 21 C13.5 25 18 27 23 25.5 C19 30.5 8.5 30.5 3.5 22 Z" fill="#0f4f9e"/><path d="M11.5 20.5 C11 16 14 13.2 17.5 13.8 C20.5 14.4 22.5 17.5 21.5 21 C18 22.5 13.5 22.5 11.5 20.5Z" fill="#e3e2e6"/></svg>
<svg style="left:1059px;top:1035px;" width="30" height="30" viewBox="0 0 30 30" preserveAspectRatio="none"><path d="M8.5 8 V5 a3 3 0 0 1 3 -3 H18.5 a3 3 0 0 1 3 3 V8" fill="none" stroke="#35a5ee" stroke-width="2.4"/><path d="M0.5 9.5 a2 2 0 0 1 2 -2 H27.5 a2 2 0 0 1 2 2 V25 a4.5 4.5 0 0 1 -4.5 4.5 H5 a4.5 4.5 0 0 1 -4.5 -4.5 Z" fill="#15457f"/><rect x="9" y="11.5" width="5.4" height="5.4" fill="#f25022"/><rect x="15.6" y="11.5" width="5.4" height="5.4" fill="#7fba00"/><rect x="9" y="18.1" width="5.4" height="5.4" fill="#00a4ef"/><rect x="15.6" y="18.1" width="5.4" height="5.4" fill="#ffb900"/></svg>
<svg style="left:1113px;top:1037px;" width="32" height="26" viewBox="0 0 32 26" preserveAspectRatio="none"><path d="M0.8 12.5 L5.8 7.5 L15.5 17.2 L10.5 22.2 Z" fill="#1f55c4"/><path d="M10.5 22.2 L5.6 17.3 L22.6 0.6 a1.6 1.6 0 0 1 2.2 0 L30.6 5.4 a1.6 1.6 0 0 1 0 2.2 L13 24.6 Z" fill="#3f9bea"/></svg>
<div style="left:1125px;top:1070.5px;width:8px;height:3px;background:#8a8a8a;border-radius:1.5px;"></div>
<svg style="left:1167px;top:1033.5px;" width="33" height="33" viewBox="0 0 33 33" preserveAspectRatio="none"><path d="M17 2 a14 14 0 1 1 -7.3 26 L2.5 30.5 L5 23.5 A14 14 0 0 1 17 2 Z" fill="#f4f6f4" stroke="#1d8a4e" stroke-width="2.6" stroke-linejoin="round"/><path d="M11.5 9.5 c0.8 -0.8 2 -0.6 2.5 0.4 l1 2.3 c0.3 0.7 0.1 1.4 -0.5 1.9 l-0.8 0.7 c1 2 2.6 3.5 4.6 4.5 l0.8 -0.9 c0.5 -0.6 1.3 -0.8 2 -0.4 l2.1 1.1 c1 0.5 1.2 1.7 0.4 2.5 c-1.3 1.4 -3.2 1.8 -5.4 0.9 c-3.6 -1.5 -6.4 -4.2 -7.8 -7.8 c-0.8 -2.1 -0.3 -3.9 1.1 -5.2 Z" fill="#1d8a4e"/></svg>
<div style="left:1215px;top:1026px;width:48px;height:48.5px;background:#f1f0f3;border-radius:5px;border:1px solid #e9e7ec;box-sizing:border-box;"></div>
<svg style="left:1223.5px;top:1034.5px;" width="31" height="31" viewBox="0 0 31 31" preserveAspectRatio="none"><defs><clipPath id="chc"><circle cx="15.5" cy="15.5" r="15"/></clipPath></defs><g clip-path="url(#chc)"><rect width="31" height="31" fill="#fbbc04"/><path d="M15.5 15.5 L-6 3 L-6 -6 L37 -6 L37 8.6 L15.5 8.6 Z" fill="#ea4335"/><path d="M15.5 15.5 L2 7.7 L-8 -2 L-8 40 L10 40 L21.5 19 Z" fill="#34a853"/><path d="M2.2 7.9 L9.5 19 L15.5 15.5 Z" fill="#34a853"/></g><circle cx="15.5" cy="15.5" r="7.2" fill="#fff"/><circle cx="15.5" cy="15.5" r="5.7" fill="#4285f4"/></svg>
<div style="left:1229.5px;top:1070.3px;width:19.5px;height:3.4px;background:#0f6cdb;border-radius:1.7px;"></div>
<svg style="left:1278.5px;top:1034.5px;" width="31" height="31" viewBox="0 0 31 31" preserveAspectRatio="none"><defs><linearGradient id="wps" x1="0" y1="0" x2="0" y2="1"><stop offset="0" stop-color="#f4211f"/><stop offset="1" stop-color="#ff5a1f"/></linearGradient></defs><circle cx="15.5" cy="15.5" r="15" fill="url(#wps)"/><path d="M6.5 10 H11 L13 17.5 L15.5 11 L18 17.5 L20 10 H24.8 L20.5 21.5 H16.5 L15.5 18.5 L14.5 21.5 H10.5 Z" fill="#fff"/></svg>
<svg style="left:1333px;top:1035px;" width="32" height="30" viewBox="0 0 32 30" preserveAspectRatio="none"><path d="M23 0.5 L31.5 4.5 V25.5 L23 29.5 Z" fill="#2d9fe8"/><path d="M23 0.5 L7 15 L23 29.5 V22 L14.5 15 L23 8 Z" fill="#1d7fd0"/><path d="M0.5 9.5 L3.5 7 L23 22 V29.5 Z" fill="#0f67b5"/><path d="M0.5 20.5 L3.5 23 L23 8 V0.5 Z" fill="#2589dc"/></svg>
<div style="left:1345px;top:1070.5px;width:8px;height:3px;background:#8a8a8a;border-radius:1.5px;"></div>
<svg style="left:1592px;top:1043px;" width="16" height="12" viewBox="0 0 16 12" preserveAspectRatio="none"><path d="M2 9.5 L8 3.5 L14 9.5" fill="none" stroke="#1c1c1c" stroke-width="1.7"/></svg>
<svg style="left:1630px;top:1041px;" width="22" height="16" viewBox="0 0 22 16" preserveAspectRatio="none"><path d="M5.5 14 a4 4 0 0 1 -0.6 -7.9 a6 6 0 0 1 11.2 -1 a4.6 4.6 0 0 1 1 8.9 Z" fill="#cfcfcf" stroke="#1c1c1c" stroke-width="1.4"/><path d="M2.5 12 L14 7 L19.5 12.5 L17 14 H5 Z" fill="#7d7d7d"/></svg>
<span class="t" style="left:1289px;width:800px;text-align:center;top:1030.60px;font-size:15px;line-height:20px;color:#1c1c1c;">ENG</span>
<span class="t" style="left:1289px;width:800px;text-align:center;top:1050.50px;font-size:15px;line-height:20px;color:#1c1c1c;">IN</span>
<svg style="left:1724px;top:1040px;" width="23" height="18" viewBox="0 0 23 18" preserveAspectRatio="none"><g fill="none" stroke="#1c1c1c" stroke-width="1.6" stroke-linecap="round"><path d="M1.5 7 a14 14 0 0 1 20 0"/><path d="M4.7 10.2 a9.5 9.5 0 0 1 13.6 0"/><path d="M7.9 13.3 a5 5 0 0 1 7.2 0"/></g><circle cx="11.5" cy="16" r="1.5" fill="#1c1c1c"/></svg>
<svg style="left:1754px;top:1040px;" width="22" height="20" viewBox="0 0 22 20" preserveAspectRatio="none"><path d="M1.5 7 H5 L10 2.5 V17.5 L5 13 H1.5 Z" fill="none" stroke="#1c1c1c" stroke-width="1.5" stroke-linejoin="round"/><path d="M12.8 7 a4 4 0 0 1 0 6 M15 4.5 a7.5 7.5 0 0 1 0 11" fill="none" stroke="#1c1c1c" stroke-width="1.4" stroke-linecap="round"/><path d="M17.6 2.6 a10.5 10.5 0 0 1 0 14.8" fill="none" stroke="#b5b5b5" stroke-width="1.2" stroke-linecap="round"/></svg>
<svg style="left:1785px;top:1043px;" width="23" height="14" viewBox="0 0 23 14" preserveAspectRatio="none"><rect x="1" y="1.5" width="17.5" height="11" rx="2.8" fill="none" stroke="#1c1c1c" stroke-width="1.5"/><rect x="3.3" y="3.8" width="7" height="6.4" rx="1" fill="#1c1c1c"/><path d="M19.8 5 a1.6 2 0 0 1 0 4 Z" fill="#1c1c1c"/></svg>
<span class="t" style="right:24.299999999999955px;top:1029.70px;font-size:15px;line-height:20px;color:#1c1c1c;">10:57 PM</span>
<span class="t" style="right:24.299999999999955px;top:1049.60px;font-size:15px;line-height:20px;color:#1c1c1c;">5/28/2025</span>
</div></body></html>
